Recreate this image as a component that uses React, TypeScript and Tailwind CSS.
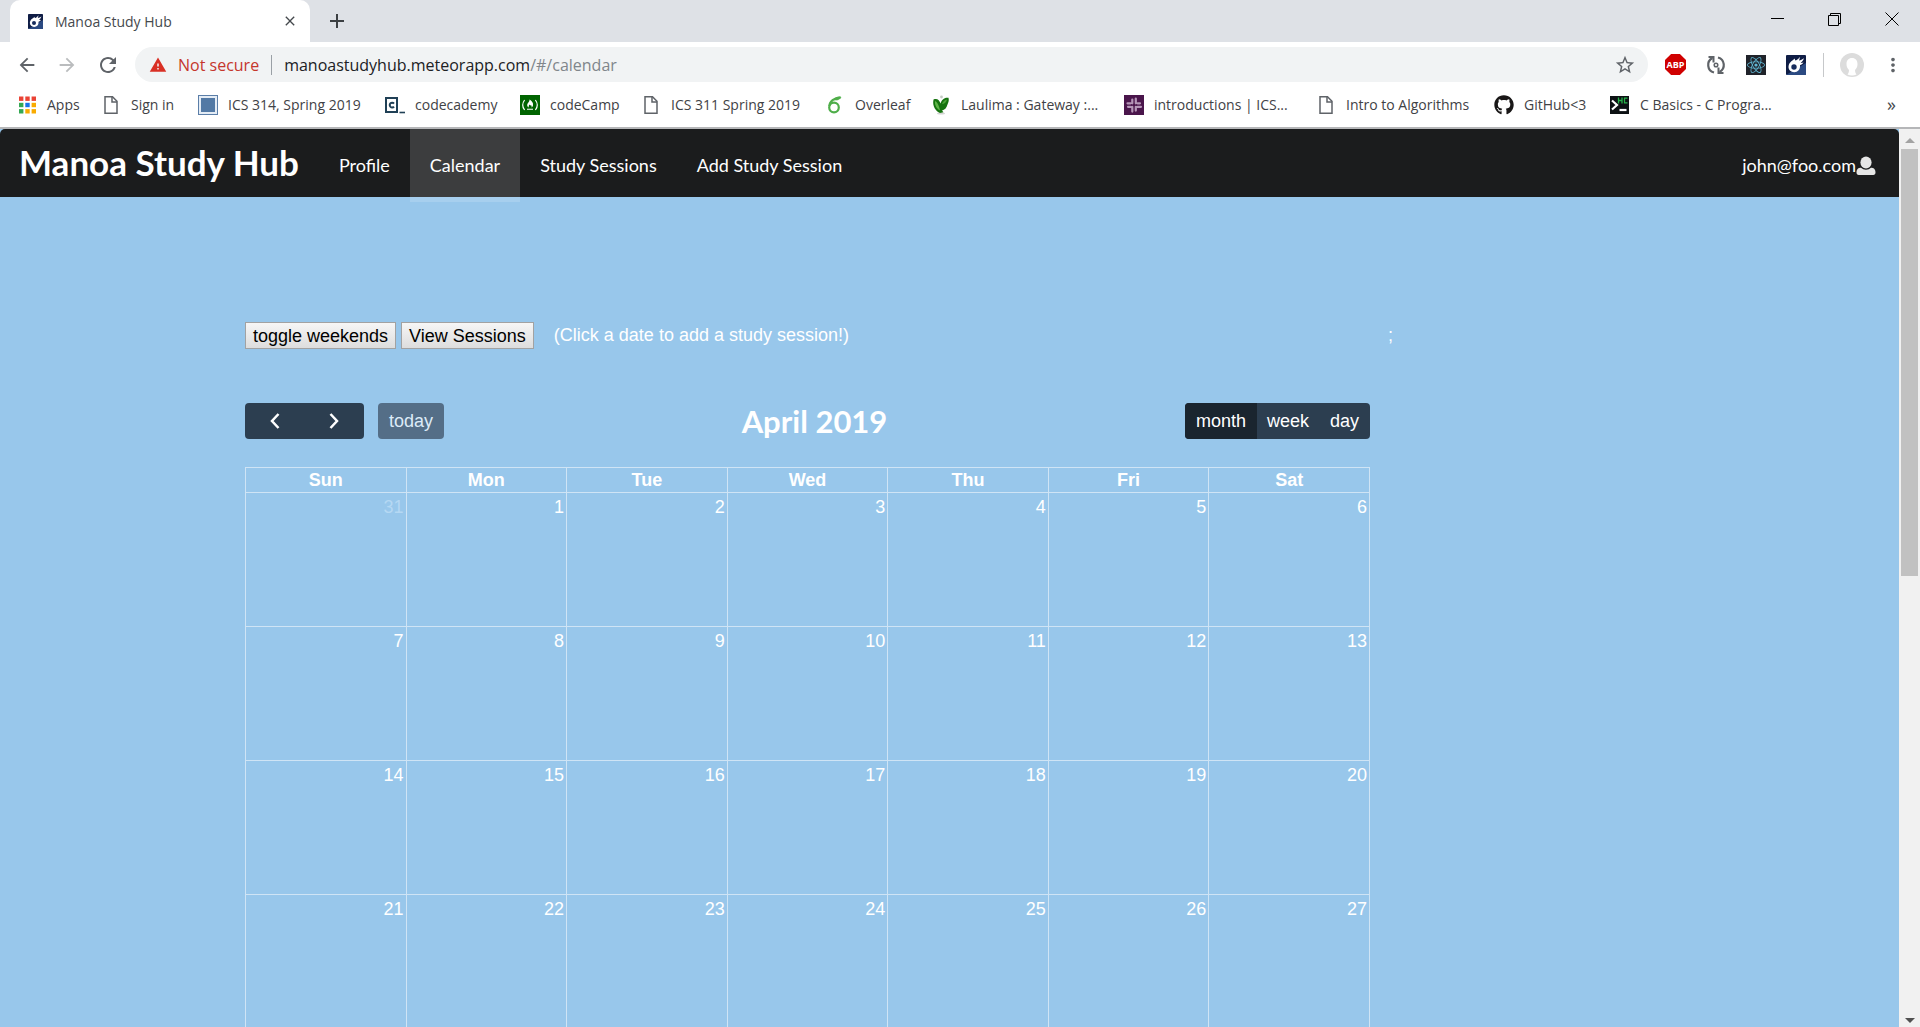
import React from "react";
import { FaReact, FaGithub } from "react-icons/fa";
import { MdRefresh, MdStarBorder, MdArrowBack, MdArrowForward, MdMoreVert, MdWarning, MdClose } from "react-icons/md";

const box = "size-5 shrink-0";

function PageIcon() {
  return (
    <svg viewBox="0 0 20 20" className={box} fill="none" stroke="#5f6368" strokeWidth="1.5">
      <path d="M4 1.8h7.5L16 6.3v12H4z" />
      <path d="M11 2v5h5" />
    </svg>
  );
}

function AppsIcon() {
  const colors = ["#ea4335", "#ea4335", "#ea4335", "#34a853", "#1a73e8", "#f9ab00", "#34a853", "#f9ab00", "#f9ab00"];
  return (
    <svg viewBox="0 0 20 20" className={box}>
      {colors.map((c, i) => (
        <rect key={i} x={2 + (i % 3) * 6.3} y={1.5 + Math.floor(i / 3) * 6.3} width="4.4" height="4.4" fill={c} />
      ))}
    </svg>
  );
}

function SquareIcon() {
  return (
    <svg viewBox="0 0 20 20" className={box}>
      <rect width="20" height="20" fill="#5b7ea8" />
      <rect x="1" y="1" width="18" height="18" fill="#e4ecf5" />
      <rect x="3" y="3" width="14" height="14" fill="#5279a5" />
    </svg>
  );
}

function CodecademyIcon() {
  return (
    <svg viewBox="0 0 20 20" className={box} fill="none" stroke="#204056">
      <rect x="1" y="3" width="11" height="14" strokeWidth="2" />
      <path d="M9 8.6a2.4 2.4 0 1 0 0 3" strokeWidth="2" />
      <path d="M14.5 17.5H20" strokeWidth="1.6" />
    </svg>
  );
}

function CodeCampIcon() {
  return (
    <svg viewBox="0 0 20 20" className={box}>
      <rect width="20" height="20" fill="#006400" />
      <path d="M4.6 5Q.8 10 4.6 15M15.400 5q3.800 5 0 10" fill="none" stroke="#fff" strokeWidth="1.200" />
      <path d="M9.600 4.500c2.400 1.600 4 3.600 3.400 6-.2 1-.9 1.700-1.600 2 .5-1 .2-1.800-.6-2.600-.3 1-1 .6-.8-.4-1.300.7-1.700 2-1 3-1.500-.5-2.100-1.800-1.700-3.200.4-1.500 2.300-2.500 2.300-4.800zM7 13.800h6v1H7z" fill="#fff" />
    </svg>
  );
}

function OverleafIcon() {
  return (
    <svg viewBox="0 0 20 20" className={box} fill="none" stroke="#4fae4a" strokeWidth="2.200">
      <circle cx="9" cy="12.500" r="4.800" />
      <path d="M4.400 11C4.600 6.500 9 3 15.500 2.400" />
      <path d="M9 4.800c3 .8 5.500 0 7-2.500C13 1.500 11 2.500 9 4.800z" fill="#4fae4a" strokeWidth=".6" />
    </svg>
  );
}

function LaulimaIcon() {
  return (
    <svg viewBox="0 0 20 20" className={box}>
      <ellipse cx="10" cy="18.500" rx="4" ry="1" fill="#d4d4d4" />
      <path d="M2.500 4.500C6 3 8.500 5 9.500 8.500 10.500 5 13.500 2 17.500 2.800c.8 3-.2 5-1 6.700-.8 3.500-3 5.500-5.500 6l1.500 1.800-3.500.7C5 16.500 1 11 2.500 4.500z" fill="#16730f" />
      <path d="M4 6c2.500 1 4 5 5 9.500C5.500 13.500 3.500 10 4 6z" fill="#5fb548" />
      <path d="M11 9c1-2.500 2.500-4 5-4.500-.5 2.500-2.500 4.500-5 4.500z" fill="#4aa336" />
      <circle cx="10.500" cy="2" r="1.400" fill="#c4ccc4" />
    </svg>
  );
}

function SlackIcon() {
  return (
    <svg viewBox="0 0 20 20" className={box}>
      <rect width="20" height="20" fill="#4a154b" />
      <path
        d="M8.300 4.500v3.800M11.800 3.500v4.800M8.300 11.800v4.800M11.800 11.800v3.800M3.500 8.300h3M13.500 8.300h2.500M4 11.800h2.500M13.500 11.800h3.500"
        stroke="#b596b7"
        strokeWidth="2.200"
        strokeLinecap="round"
      />
    </svg>
  );
}

function TerminalIcon() {
  return (
    <svg viewBox="0 0 20 20" className={box}>
      <path d="M0 1h19v18H0z" fill="#0d1114" />
      <path d="M2 5.500l5 4.500-5 4.500" fill="none" stroke="#fff" strokeWidth="2.200" />
      <path d="M9.500 15h7" stroke="#fff" strokeWidth="2.200" />
      <path d="M8.500 2.500v6M12 2.500v6M8.500 5.500H12M17.500 3.200h-3v4.600h3" stroke="#27b34a" strokeWidth="1.300" fill="none" />
    </svg>
  );
}

function CometIcon({ className }: { className: string }) {
  return (
    <svg viewBox="0 0 20 20" className={className}>
      <rect width="20" height="20" rx="1" fill="#0f1d45" />
      <path d="M0 20h19a1 1 0 0 0 1-1V8z" fill="#2b4a82" />
      <path d="M2.500 12c0-4.500 3.500-6.200 6.500-8.500-.3 1 0 1.800.8 1.900C11.500 5 12.800 3.300 14 1.800c-.2 1.500-.6 2.600-1 3.600 1.800-.2 3.300-1 5-2.200-.8 2-2 3.600-3.300 4.700 1 .2 1.800 0 2.800-.4-.9 1.500-2.200 2.300-3.500 2.800.5 4-2.200 6.900-5.800 6.900-3.200 0-5.700-2.100-5.700-5.200z" fill="#fff" />
      <circle cx="8" cy="12" r="2.700" fill="#172c5c" />
    </svg>
  );
}

function AbpIcon() {
  return (
    <span className="flex size-[21px] items-center justify-center bg-[#d00000] font-['Open_Sans',sans-serif] text-[9px] font-bold text-white [clip-path:polygon(29%_0,71%_0,100%_29%,100%_71%,71%_100%,29%_100%,0_71%,0_29%)]">
      ABP
    </span>
  );
}

function SyncIcon() {
  return (
    <svg viewBox="0 0 20 20" className={box} fill="none" stroke="#5f6368" strokeWidth="2.200">
      <path d="M8 17.500A7.800 7.800 0 0 1 6.500 3" />
      <path d="M12 2.500A7.800 7.800 0 0 1 13.500 17" />
      <path d="M2.500 2h5v5.500M17.500 18h-5v-5.500" strokeWidth="2" />
      <circle cx="10" cy="10" r="1.800" strokeWidth="1.500" />
    </svg>
  );
}

function UserIcon() {
  return (
    <svg viewBox="0 0 20 20" className={box} fill="#e6e6e6">
      <ellipse cx="10" cy="6.500" rx="5.600" ry="6" />
      <path d="M.5 16.500c0-3.500 2-4.800 4.500-4.800a7 7 0 0 0 10 0c2.500 0 4.500 1.300 4.500 4.800 0 1.600-.8 2.500-2.200 2.500H2.700C1.300 19 .5 18.100.5 16.500z" />
    </svg>
  );
}

const bookmarks = [
  { label: "Apps", icon: <AppsIcon />, width: "w-[84px]" },
  { label: "Sign in", icon: <PageIcon />, width: "w-[97px]" },
  { label: "ICS 314, Spring 2019", icon: <SquareIcon />, width: "w-[187px]" },
  { label: "codecademy", icon: <CodecademyIcon />, width: "w-[135px]" },
  { label: "codeCamp", icon: <CodeCampIcon />, width: "w-[121px]" },
  { label: "ICS 311 Spring 2019", icon: <PageIcon />, width: "w-[184px]" },
  { label: "Overleaf", icon: <OverleafIcon />, width: "w-[106px]" },
  { label: "Laulima : Gateway :...", icon: <LaulimaIcon />, width: "w-[193px]" },
  { label: "introductions | ICS...", icon: <SlackIcon />, width: "w-[192px]" },
  { label: "Intro to Algorithms", icon: <PageIcon />, width: "w-[178px]" },
  { label: "GitHub<3", icon: <FaGithub className="size-5 shrink-0 text-[#191717]" />, width: "w-[116px]" },
  { label: "C Basics - C Progra...", icon: <TerminalIcon />, width: "w-[180px]" },
];

function TabStrip() {
  return (
    <div className="flex h-[42px] shrink-0 items-stretch bg-[#dee1e6]">
      <div className="ml-[10px] flex w-[300px] items-center rounded-t-[10px] bg-white pr-[12px] pl-[18px]">
        <CometIcon className="size-[15px]" />
        <span className="ml-[12px] flex-1 text-[14px] text-[#45494d]">Manoa Study Hub</span>
        <button aria-label="Close tab"><MdClose className="size-4 text-[#45494d]" /></button>
      </div>
      <button aria-label="New tab" className="ml-[19px]">
        <svg viewBox="0 0 16 16" className="size-4" stroke="#3c4043" strokeWidth="2"><path d="M8 1v14M1 8h14" /></svg>
      </button>
      <div className="ml-auto flex items-center pb-[5px]">
        <button aria-label="Minimize" className="flex w-[57px] justify-center">
          <svg viewBox="0 0 14 14" className="size-[14px]" stroke="#000"><path d="M0 6.500h13" /></svg>
        </button>
        <button aria-label="Restore" className="flex w-[57px] justify-center">
          <svg viewBox="0 0 14 14" className="size-[14px]" stroke="#000" fill="none"><path d="M.5 3.500h10v10H.5zM2.500 3.500v-2h10v10h-2" /></svg>
        </button>
        <button aria-label="Close window" className="flex w-[57px] justify-center">
          <svg viewBox="0 0 14 14" className="size-[14px]" stroke="#000"><path d="M.5.500l13 13M13.500.500l-13 13" /></svg>
        </button>
      </div>
    </div>
  );
}

function AddressBar() {
  return (
    <div className="flex h-[45px] shrink-0 items-center bg-white pr-[16px] pl-[16px]">
      <button aria-label="Back"><MdArrowBack className="size-[22px] text-[#5f6368]" /></button>
      <button aria-label="Forward" className="ml-[18px]"><MdArrowForward className="size-[22px] text-[#babcbe]" /></button>
      <button aria-label="Reload" className="ml-[18px]"><MdRefresh className="size-6 text-[#5f6368]" /></button>
      <div className="ml-[15px] flex h-[35px] flex-1 items-center rounded-full bg-[#f1f3f4] pr-[12px] pl-[14px] text-[16px]">
        <MdWarning className="size-[18px] text-[#d93025]" />
        <span className="ml-[11px] text-[#c5362c]">Not secure</span>
        <span className="mx-[12px] h-5 w-px bg-[#9aa0a6]" />
        <span className="flex-1 text-[#202124]">manoastudyhub.meteorapp.com<span className="text-[#80868b]">/#/calendar</span></span>
        <button aria-label="Bookmark this page"><MdStarBorder className="size-[22px] text-[#5f6368]" /></button>
      </div>
      <div className="ml-[17px] flex items-center gap-5">
        <AbpIcon />
        <SyncIcon />
        <span className="flex size-5 items-center justify-center bg-[#20232a]"><FaReact className="size-[18px] text-[#61b8d4]" /></span>
        <CometIcon className="size-5" />
      </div>
      <span className="ml-[17px] h-6 w-px bg-[#c6c8ca]" />
      <button aria-label="Profile" className="ml-[16px]">
        <svg viewBox="0 0 24 24" className="size-6">
          <circle cx="12" cy="12" r="12" fill="#dcdcdc" />
          <path d="M12 5c-3.500 0-5.500 2.500-5.500 6 0 3 1 4.500 2.500 6 0 2-.5 3-1.500 4.500a11.500 11.500 0 0 0 9 0C15.500 20 15 19 15 17c1.500-1.500 2.500-3 2.500-6 0-3.500-2-6-5.500-6z" fill="#fff" />
        </svg>
      </button>
      <button aria-label="Menu" className="ml-[18px]"><MdMoreVert className="size-[22px] text-[#5f6368]" /></button>
    </div>
  );
}

function BookmarksBar() {
  return (
    <div className="flex h-[42px] shrink-0 items-center border-b-2 border-[#b5b6b8] bg-white pr-[24px] pb-[5px] pl-[17px]">
      <nav className="flex min-w-0 flex-1" aria-label="Bookmarks">
        {bookmarks.map((b) => (
          <a key={b.label} href="#" className={`flex shrink-0 items-center gap-[10px] text-[14px] whitespace-nowrap text-[#3f4246] ${b.width}`}>
            {b.icon}
            {b.label}
          </a>
        ))}
      </nav>
      <button className="text-[18px] text-[#45494d]" aria-label="More bookmarks">»</button>
    </div>
  );
}

const navLinks = ["Profile", "Calendar", "Study Sessions", "Add Study Session"];

function NavBar() {
  return (
    <header className="flex h-[68px] items-start rounded-t-[5px] bg-[#1b1c1d] font-[Lato,sans-serif] text-white">
      <a href="#" className="pt-[11px] pr-5 pl-[19px] text-[35px] leading-[44px] font-bold">Manoa Study Hub</a>
      {navLinks.map((label) => (
        <a
          key={label}
          href="#"
          className={`flex h-[73px] items-center px-5 text-[18px] ${label === "Calendar" ? "bg-white/15" : ""}`}
        >
          {label}
        </a>
      ))}
      <button className="mr-[23px] ml-auto flex h-[73px] items-center text-[18px]">
        john@foo.com
        <UserIcon />
      </button>
    </header>
  );
}

const days = ["Sun", "Mon", "Tue", "Wed", "Thu", "Fri", "Sat"];
const weeks = [
  [31, 1, 2, 3, 4, 5, 6],
  [7, 8, 9, 10, 11, 12, 13],
  [14, 15, 16, 17, 18, 19, 20],
  [21, 22, 23, 24, 25, 26, 27],
];

const plainButton = "h-[27px] border border-[#a2a2a2] bg-linear-to-b from-[#f6f6f6] to-[#dddddd] px-[7px] text-black";

function Calendar() {
  return (
    <section className="mr-[529px] ml-[245px] pt-[125px] text-[18px]">
      <div className="relative flex h-[27px] items-center">
        <button className={plainButton}>toggle weekends</button>
        <button className={`ml-[5px] ${plainButton}`}>View Sessions</button>
        <span className="ml-5">(Click a date to add a study session!)</span>
        <span className="absolute left-full ml-[18px]">;</span>
      </div>
      <div className="mt-[54px] flex h-9 items-center justify-between">
        <div className="flex gap-[14px]">
          <div className="flex h-9 w-[119px] rounded-[4px] bg-[#2c3e50]">
            <button aria-label="Previous month" className="flex flex-1 items-center justify-center">
              <svg viewBox="0 0 10 16" className="h-4 w-[10px]" fill="none" stroke="#fff" strokeWidth="2.500"><path d="M8.500 1L2 8l6.500 7" /></svg>
            </button>
            <button aria-label="Next month" className="flex flex-1 items-center justify-center">
              <svg viewBox="0 0 10 16" className="h-4 w-[10px]" fill="none" stroke="#fff" strokeWidth="2.500"><path d="M1.500 1L8 8l-6.500 7" /></svg>
            </button>
          </div>
          <button className="h-9 rounded-[4px] bg-[#546e87] px-[11px] text-[#dcebf7]">today</button>
        </div>
        <h2 className="font-[Lato,sans-serif] text-[31px] leading-9 font-bold">April 2019</h2>
        <div className="flex h-9 overflow-hidden rounded-[4px] bg-[#2c3e50]">
          <button className="bg-[#1a252f] px-[11px]">month</button>
          <button className="px-[10px]">week</button>
          <button className="px-[11px]">day</button>
        </div>
      </div>
      <table className="mt-[28px] w-full table-fixed border-collapse">
        <thead>
          <tr className="h-[25px]">
            {days.map((d) => (
              <th key={d} className="border border-[#cfe4f5] p-0 leading-6 font-bold">{d}</th>
            ))}
          </tr>
        </thead>
        <tbody>
          {weeks.map((week) => (
            <tr key={week[0]} className="h-[134px]">
              {week.map((n) => (
                <td key={n} className={`border border-[#cfe4f5] px-[2px] pt-[2px] pb-0 text-right align-top leading-6 ${n === 31 ? "text-[#b5d8f3]" : ""}`}>{n}</td>
              ))}
            </tr>
          ))}
        </tbody>
      </table>
    </section>
  );
}

function ScrollBar() {
  return (
    <div className="flex w-[21px] shrink-0 flex-col items-center bg-[#f1f1f1]" aria-hidden="true">
      <svg viewBox="0 0 20 20" className="size-5" fill="#a3a3a3"><path d="M5 14l5-5 5 5z" /></svg>
      <div className="h-[427px] w-[17px] bg-[#c1c1c1]" />
      <svg viewBox="0 0 20 20" className="mt-auto size-5" fill="#505050"><path d="M5 11l5 5 5-5z" /></svg>
    </div>
  );
}

export default function App() {
  return (
    <div className="flex h-screen flex-col overflow-hidden bg-white font-['Open_Sans',sans-serif]">
      <TabStrip />
      <AddressBar />
      <BookmarksBar />
      <div className="flex min-h-0 flex-1">
        <main className="min-w-0 flex-1 overflow-hidden bg-[#98c7eb] font-['Liberation_Sans',sans-serif] text-white">
          <NavBar />
          <Calendar />
        </main>
        <ScrollBar />
      </div>
    </div>
  );
}
